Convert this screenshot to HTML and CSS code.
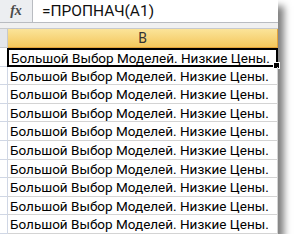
FILE: index.html
```html
<!DOCTYPE html>
<html lang="ru">

<head>
  <meta charset="UTF-8">
  <title>ПРОПНАЧ</title>
  <link rel="stylesheet" href="styles.css">
</head>

<body>

  <div class="window">
    <div class="formula-bar">
      <div class="fx-box"><span class="fx">fx</span></div>
      <div class="formula-input">=ПРОПНАЧ(А1)</div>
    </div>

    <div class="sheet">
      <div class="corner"></div>
      <div class="col-head">B</div>

      <div class="row-head"></div>
      <div class="cell selected">Большой Выбор Моделей. Низкие Цены.<span class="handle"></span></div>
      <div class="row-head"></div>
      <div class="cell">Большой Выбор Моделей. Низкие Цены.</div>
      <div class="row-head"></div>
      <div class="cell">Большой Выбор Моделей. Низкие Цены.</div>
      <div class="row-head"></div>
      <div class="cell">Большой Выбор Моделей. Низкие Цены.</div>
      <div class="row-head"></div>
      <div class="cell">Большой Выбор Моделей. Низкие Цены.</div>
      <div class="row-head"></div>
      <div class="cell">Большой Выбор Моделей. Низкие Цены.</div>
      <div class="row-head"></div>
      <div class="cell">Большой Выбор Моделей. Низкие Цены.</div>
      <div class="row-head"></div>
      <div class="cell">Большой Выбор Моделей. Низкие Цены.</div>
      <div class="row-head"></div>
      <div class="cell">Большой Выбор Моделей. Низкие Цены.</div>
      <div class="row-head"></div>
      <div class="cell">Большой Выбор Моделей. Низкие Цены.</div>
    </div>
  </div>

</body>

</html>
```

FILE: styles.css
```css
body {
  margin: 0;
  background-color: white;
  font-family: 'Roboto', sans-serif;
}

.window {
  width: 278px;
  background-color: #f0f0f0;
  box-shadow: 6px 6px 7px rgba(0, 0, 0, 0.5);
}

.formula-bar {
  display: flex;
  height: 22px;
  border-bottom: 1px solid #b9bcc1;
}

.fx-box {
  width: 32px;
  border-right: 1px solid #b9bcc1;
  background-color: #eceef1;
  display: flex;
  align-items: center;
  justify-content: center;
}

.fx {
  font-family: 'Liberation Serif', serif;
  font-style: italic;
  font-weight: bold;
  font-size: 14px;
  color: #4a4a4a;
}

.formula-input {
  flex: 1;
  background-color: white;
  padding-left: 9px;
  font-size: 15.5px;
  line-height: 22px;
  color: #111;
}

.sheet {
  margin-top: 5px;
  display: grid;
  grid-template-columns: 8px 1fr;
  grid-template-rows: 19px;
  grid-auto-rows: 18.6px;
  background-color: white;
  border-top: 1px solid #c7c9cc;
}

.corner {
  background-color: #e4e6ea;
  border-right: 1px solid #c7c9cc;
  border-bottom: 1px solid #c7c9cc;
}

.col-head {
  background: linear-gradient(#fbe49a, #f4c75c);
  border-bottom: 1px solid #e3a33a;
  border-right: 1px solid #e3a33a;
  text-align: center;
  font-size: 14px;
  line-height: 18px;
  color: #333;
}

.row-head {
  border-right: 1px solid #d0d7e5;
  border-bottom: 1px solid #d0d7e5;
}

.cell {
  position: relative;
  border-bottom: 1px solid #d4d4d4;
  border-right: 1px solid #d4d4d4;
  padding-left: 2px;
  font-size: 13.5px;
  line-height: 18px;
  color: #000;
  white-space: nowrap;
}

.cell.selected {
  border: 2px solid #000;
  margin-left: -1px;
  line-height: 16px;
}

.handle {
  position: absolute;
  right: -4px;
  bottom: -4px;
  width: 5px;
  height: 5px;
  background-color: #000;
  border: 1px solid white;
}
```
